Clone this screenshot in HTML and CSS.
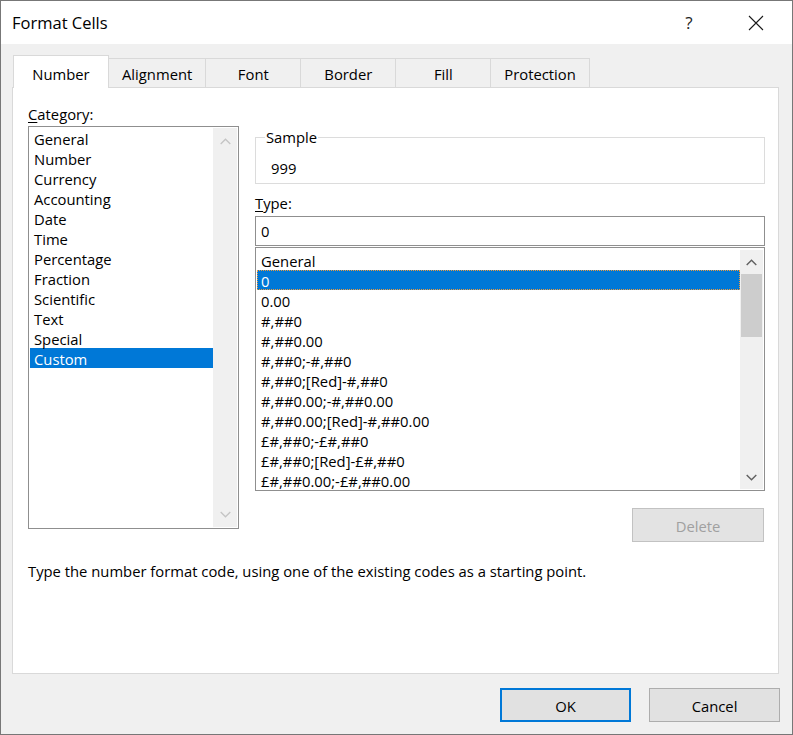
FILE: index.html
```html
<!DOCTYPE html>
<html>
<head>
<meta charset="utf-8">
<title>Format Cells</title>
<link rel="stylesheet" href="styles.css">
</head>
<body>
<div class="window">
  <div class="titlebar">
    <div class="title">Format Cells</div>
    <div class="help">?</div>
    <div class="close">
      <svg width="16" height="16" viewBox="0 0 16 16"><path d="M1 1L15 15M15 1L1 15" stroke="#1a1a1a" stroke-width="1.1" fill="none"/></svg>
    </div>
  </div>
  <div class="body">
    <div class="tabs">
      <div class="tab active">Number</div>
      <div class="tab">Alignment</div>
      <div class="tab">Font</div>
      <div class="tab">Border</div>
      <div class="tab">Fill</div>
      <div class="tab">Protection</div>
    </div>
    <div class="panel">
      <div class="cols">
        <div class="left">
          <div class="label"><u>C</u>ategory:</div>
          <div class="listbox cat">
            <div class="items">
              <div class="item">General</div>
              <div class="item">Number</div>
              <div class="item">Currency</div>
              <div class="item">Accounting</div>
              <div class="item">Date</div>
              <div class="item">Time</div>
              <div class="item">Percentage</div>
              <div class="item">Fraction</div>
              <div class="item">Scientific</div>
              <div class="item">Text</div>
              <div class="item">Special</div>
              <div class="item selected">Custom</div>
            </div>
            <div class="scrollbar cat-sb">
              <div class="sb-btn"><svg width="11" height="7" viewBox="0 0 11 7"><polyline points="0.7,6 5.5,1.2 10.3,6" fill="none" stroke="#c4c4c4" stroke-width="1.3"/></svg></div>
              <div class="sb-track"></div>
              <div class="sb-btn"><svg width="11" height="7" viewBox="0 0 11 7"><polyline points="0.7,1 5.5,5.8 10.3,1" fill="none" stroke="#c4c4c4" stroke-width="1.3"/></svg></div>
            </div>
          </div>
        </div>
        <div class="right">
          <fieldset class="sample">
            <legend>Sample</legend>
            <div class="sample-val">999</div>
          </fieldset>
          <div class="label type-label"><u>T</u>ype:</div>
          <div class="input">0</div>
          <div class="listbox types">
            <div class="items">
              <div class="item">General</div>
              <div class="item selected focus">0</div>
              <div class="item">0.00</div>
              <div class="item">#,##0</div>
              <div class="item">#,##0.00</div>
              <div class="item">#,##0;-#,##0</div>
              <div class="item">#,##0;[Red]-#,##0</div>
              <div class="item">#,##0.00;-#,##0.00</div>
              <div class="item">#,##0.00;[Red]-#,##0.00</div>
              <div class="item">£#,##0;-£#,##0</div>
              <div class="item">£#,##0;[Red]-£#,##0</div>
              <div class="item">£#,##0.00;-£#,##0.00</div>
            </div>
            <div class="scrollbar types-sb">
              <div class="sb-btn"><svg width="11" height="7" viewBox="0 0 11 7"><polyline points="0.7,6 5.5,1.2 10.3,6" fill="none" stroke="#606060" stroke-width="1.4"/></svg></div>
              <div class="sb-track"><div class="sb-thumb"></div></div>
              <div class="sb-btn"><svg width="11" height="7" viewBox="0 0 11 7"><polyline points="0.7,1 5.5,5.8 10.3,1" fill="none" stroke="#606060" stroke-width="1.4"/></svg></div>
            </div>
          </div>
          <div class="delete-row"><div class="btn disabled">Delete</div></div>
        </div>
      </div>
      <div class="desc">Type the number format code, using one of the existing codes as a starting point.</div>
    </div>
    <div class="footer">
      <div class="btn default">OK</div>
      <div class="btn">Cancel</div>
    </div>
  </div>
</div>
</body>
</html>
```

FILE: styles.css
```css
* { box-sizing: border-box; }
html, body { margin: 0; padding: 0; background: #f0f0f0; }
body {
  font-family: "Open Sans", "Noto Sans", "Liberation Sans", sans-serif;
  font-size: 14.8px;
  color: #000;
}
.window {
  width: 793px;
  height: 735px;
  border: 1px solid #777;
  background: #f0f0f0;
  display: flex;
  flex-direction: column;
}
.titlebar {
  height: 43px;
  background: #fff;
  display: flex;
  align-items: center;
  padding-left: 11px;
  flex-shrink: 0;
}
.title { font-size: 16.5px; flex: 1; color: #000; }
.help { font-size: 17px; width: 20px; text-align: center; margin-right: 49px; color: #222; }
.close { width: 16px; height: 16px; margin-right: 28px; display: flex; }
.body { padding: 11px 13px 0 11px; flex: 1; display: flex; flex-direction: column; }
.tabs {
  display: flex;
  align-items: flex-end;
  height: 32px;
  flex-shrink: 0;
  padding-left: 1px;
}
.tab {
  min-width: 96px;
  padding: 0 13px;
  height: 29px;
  line-height: 30px;
  text-align: center;
  border: 1px solid #d9d9d9;
  border-bottom: none;
  margin-left: -1px;
  background: #f0f0f0;
}
.tab:first-child { margin-left: 0; }
.tab.active {
  height: 33px;
  line-height: 36px;
  margin-bottom: -1px;
  background: #fff;
  position: relative;
  z-index: 1;
}
.panel {
  height: 587px;
  flex-shrink: 0;
  background: #fff;
  border: 1px solid #d9d9d9;
  padding: 16px 13px 0 15px;
}
.cols { display: grid; grid-template-columns: 211px 510px; column-gap: 16px; }
.label { height: 20px; line-height: 20px; }
.label u { text-decoration-thickness: 1px; text-underline-offset: 2px; }
.listbox {
  border: 1px solid #8f8f8f;
  background: #fff;
  display: flex;
}
.cat { margin-top: 2px; height: 403px; padding: 1px 1px 1px 1px; }
.items { flex: 1; min-width: 0; }
.item { height: 20px; line-height: 23px; padding-left: 4px; white-space: nowrap; }
.item.selected { background: #0078d7; color: #fff; }
.item.focus { outline: 1px dotted #f09a3a; outline-offset: -1px; }
.scrollbar { background: #f0f0f0; display: flex; flex-direction: column; }
.cat-sb { width: 24px; }
.cat-sb .sb-btn { height: 26px; }
.sb-btn { display: flex; align-items: center; justify-content: center; flex-shrink: 0; }
.sb-track { flex: 1; padding: 0 1px; }
.types-sb { width: 23px; }
.types-sb .sb-btn { height: 24px; }
.sb-thumb { height: 63px; background: #cdcdcd; }
.sample {
  margin: 23px 0 0 0;
  padding: 0 0 5px 15px;
  border: 1px solid #dcdcdc;
  min-width: 0;
}
.sample legend { padding: 0 1px; margin-left: -6px; line-height: 20px; }
.sample-val { margin-top: 11px; height: 20px; line-height: 21px; }
.type-label { margin-top: 9px; line-height: 21px; }
.input {
  margin-top: 3px;
  height: 30px;
  border: 1px solid #8f8f8f;
  line-height: 28px;
  padding-left: 5px;
}
.types { margin-top: 1px; height: 244px; padding: 2px 1px 1px 1px; }
.delete-row { display: flex; justify-content: flex-end; margin-top: 17px; padding-right: 1px; }
.btn {
  width: 131px;
  height: 34px;
  background: #e1e1e1;
  border: 1px solid #adadad;
  display: flex;
  align-items: center;
  justify-content: center;
  padding-top: 2px;
}
.btn.disabled { background: #e3e3e3; border-color: #c2c2c2; color: #a0a0a0; width: 132px; }
.btn.default { border: 2px solid #0078d7; }
.desc { margin-top: 18px; line-height: 23px; }
.footer { display: flex; justify-content: flex-end; gap: 18px; margin-top: 14px; margin-right: -1px; }
```
